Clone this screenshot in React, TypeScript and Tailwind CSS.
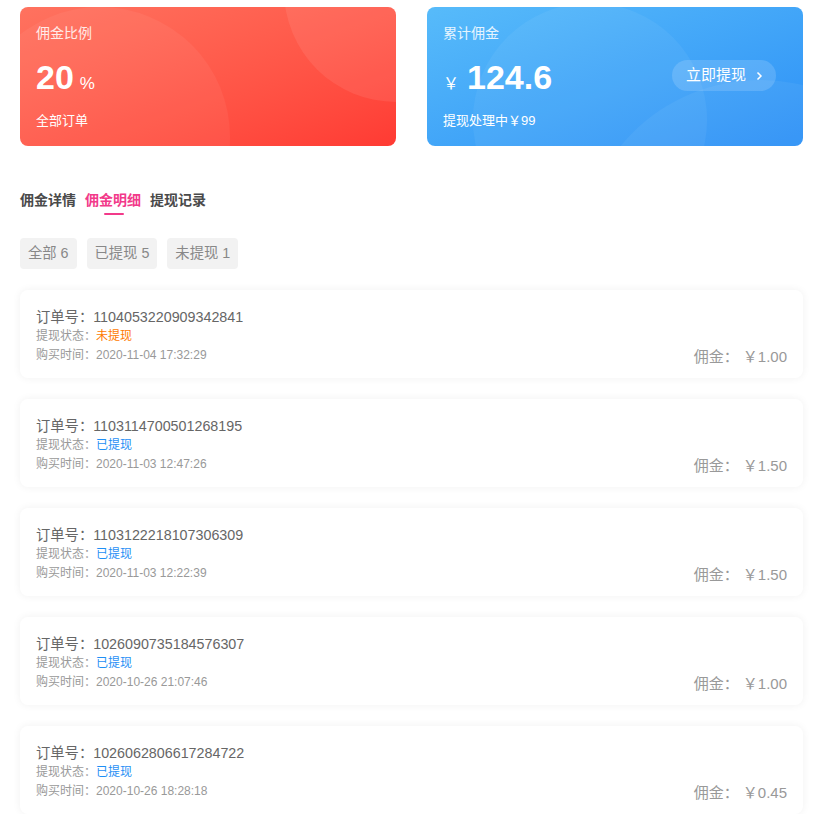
const font = { fontFamily: '"Liberation Sans", "Noto Sans CJK SC", sans-serif' };

type Order = {
  no: string;
  status: "未提现" | "已提现";
  time: string;
  amount: string;
};

const orders: Order[] = [
  { no: "1104053220909342841", status: "未提现", time: "2020-11-04 17:32:29", amount: "1.00" },
  { no: "1103114700501268195", status: "已提现", time: "2020-11-03 12:47:26", amount: "1.50" },
  { no: "1103122218107306309", status: "已提现", time: "2020-11-03 12:22:39", amount: "1.50" },
  { no: "1026090735184576307", status: "已提现", time: "2020-10-26 21:07:46", amount: "1.00" },
  { no: "1026062806617284722", status: "已提现", time: "2020-10-26 18:28:18", amount: "0.45" },
];

function OrderCard({ o }: { o: Order }) {
  return (
    <div className="bg-white rounded-lg shadow-[0_0_8px_rgba(0,0,0,0.06)] px-4 pt-[17px] pb-[14px] flex items-end justify-between">
      <div>
        <p className="text-[14.3px] leading-5 text-[#666]">订单号：{o.no}</p>
        <p className="text-[12px] leading-[19px] text-[#999]">
          提现状态：
          <span className={o.status === "未提现" ? "text-[#ff7a00]" : "text-[#1f8ff5]"}>{o.status}</span>
        </p>
        <p className="text-[12px] leading-[18px] text-[#999]">购买时间：{o.time}</p>
      </div>
      <p className="text-[15px] leading-5 text-[#999] mb-[-3px]">佣金： ￥{o.amount}</p>
    </div>
  );
}

export default function App() {
  return (
    <div className="bg-white min-h-[814px] pl-5 pr-[14px] pt-[7px]" style={font}>
      <div className="grid grid-cols-2 gap-[31px]">
        <div className="relative overflow-hidden rounded-lg h-[139px] bg-gradient-to-br from-[#ff725f] to-[#ff3a33] text-white px-4 pt-4">
          <div className="absolute left-[-50px] top-0 w-[260px] h-[260px] rounded-full bg-white/[0.05]" />
          <div className="absolute left-[264px] top-[-129px] w-[224px] h-[224px] rounded-full bg-white/[0.08]" />
          <div className="relative">
            <p className="text-[14px] leading-5 text-white/85">佣金比例</p>
            <p className="mt-[17px] h-[36px] flex items-baseline">
              <span className="text-[34px] leading-none font-bold">20</span>
              <span className="ml-[6px] text-[17px]">%</span>
            </p>
            <p className="mt-[15px] text-[13px] leading-5">全部订单</p>
          </div>
        </div>
        <div className="relative overflow-hidden rounded-lg h-[139px] bg-gradient-to-br from-[#57bbfa] to-[#2d90f6] text-white px-4 pt-4">
          <div className="absolute left-[46px] top-[-4px] w-[234px] h-[234px] rounded-full bg-white/[0.05]" />
          <div className="absolute left-[153px] top-[73px] w-[360px] h-[360px] rounded-full bg-white/[0.05]" />
          <div className="relative flex items-start justify-between">
            <div>
              <p className="text-[14px] leading-5 text-white/85">累计佣金</p>
              <p className="mt-[17px] h-[36px] flex items-baseline">
                <span className="text-[16px] mr-[8px]">￥</span>
                <span className="text-[34px] leading-none font-bold">124.6</span>
              </p>
              <p className="mt-[15px] text-[13px] leading-5">提现处理中￥99</p>
            </div>
            <div className="mt-[37px] mr-[11px] h-[31px] rounded-full bg-white/[0.15] pl-[14px] pr-[13px] flex items-center gap-[10px] text-[15px]">
              立即提现
              <svg width="7" height="10" viewBox="0 0 7 10" fill="none" stroke="white" strokeWidth="1.5">
                <path d="M1.5 1.5 5 5 1.5 8.5" />
              </svg>
            </div>
          </div>
        </div>
      </div>

      <div className="mt-[44px] flex gap-[9px] text-[14px] font-bold text-[#4a4a4a]">
        <span className="leading-5">佣金详情</span>
        <span className="relative leading-5 text-[#f23a8a]">
          佣金明细
          <span className="absolute left-[19px] top-[23px] w-[20px] h-[2px] bg-[#f23a8a] rounded" />
        </span>
        <span className="leading-5">提现记录</span>
      </div>

      <div className="mt-[28px] flex gap-[10px]">
        {["全部 6", "已提现 5", "未提现 1"].map((t) => (
          <span key={t} className="h-[31px] px-2 rounded bg-[#f2f2f2] text-[14.3px] text-[#888] flex items-center">
            {t}
          </span>
        ))}
      </div>

      <div className="mt-[21px] flex flex-col gap-[21px] pb-4">
        {orders.map((o) => (
          <OrderCard key={o.no} o={o} />
        ))}
      </div>
    </div>
  );
}
